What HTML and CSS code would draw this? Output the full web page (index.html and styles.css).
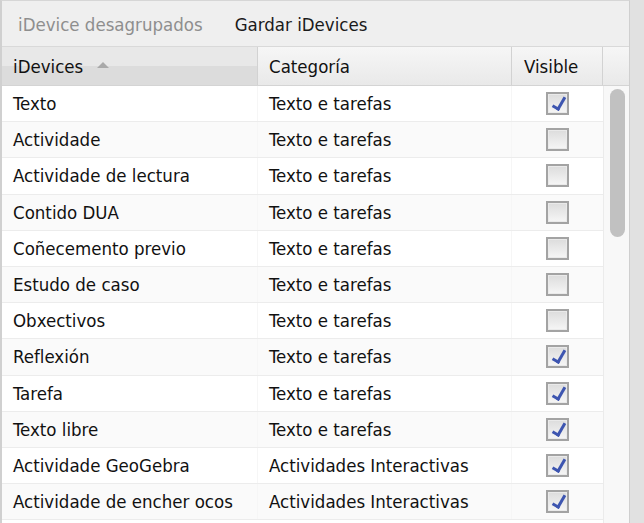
FILE: index.html
```html
<!DOCTYPE html>
<html lang="gl">
<head>
<meta charset="utf-8">
<title>iDevices</title>
<link rel="stylesheet" href="styles.css">
</head>
<body>
<div class="panel">
  <div class="toolbar">
    <span class="tab tab-muted">iDevice desagrupados</span>
    <span class="tab">Gardar iDevices</span>
  </div>
  <div class="head">
    <div class="hcell sorted">iDevices <span class="arrow"></span></div>
    <div class="hcell">Categoría</div>
    <div class="hcell vis">Visible</div>
    <div class="hcell filler"></div>
  </div>
  <div class="body">
    <div class="rows">
      <div class="row"><div class="cell">Texto</div><div class="cell">Texto e tarefas</div><div class="cell center"><span class="cb on"></span></div></div>
      <div class="row"><div class="cell">Actividade</div><div class="cell">Texto e tarefas</div><div class="cell center"><span class="cb"></span></div></div>
      <div class="row"><div class="cell">Actividade de lectura</div><div class="cell">Texto e tarefas</div><div class="cell center"><span class="cb"></span></div></div>
      <div class="row"><div class="cell">Contido DUA</div><div class="cell">Texto e tarefas</div><div class="cell center"><span class="cb"></span></div></div>
      <div class="row"><div class="cell">Coñecemento previo</div><div class="cell">Texto e tarefas</div><div class="cell center"><span class="cb"></span></div></div>
      <div class="row"><div class="cell">Estudo de caso</div><div class="cell">Texto e tarefas</div><div class="cell center"><span class="cb"></span></div></div>
      <div class="row"><div class="cell">Obxectivos</div><div class="cell">Texto e tarefas</div><div class="cell center"><span class="cb"></span></div></div>
      <div class="row"><div class="cell">Reflexión</div><div class="cell">Texto e tarefas</div><div class="cell center"><span class="cb on"></span></div></div>
      <div class="row"><div class="cell">Tarefa</div><div class="cell">Texto e tarefas</div><div class="cell center"><span class="cb on"></span></div></div>
      <div class="row"><div class="cell">Texto libre</div><div class="cell">Texto e tarefas</div><div class="cell center"><span class="cb on"></span></div></div>
      <div class="row"><div class="cell">Actividade GeoGebra</div><div class="cell">Actividades Interactivas</div><div class="cell center"><span class="cb on"></span></div></div>
      <div class="row"><div class="cell">Actividade de encher ocos</div><div class="cell">Actividades Interactivas</div><div class="cell center"><span class="cb on"></span></div></div>
    </div>
    <div class="scrollbar"><div class="thumb"></div></div>
  </div>
</div>
</body>
</html>
```

FILE: styles.css
```css
html, body {
  margin: 0;
  padding: 0;
  height: 100%;
  overflow: hidden;
}
body {
  background: #e1e1e1;
  font-family: "DejaVu Sans Condensed", "DejaVu Sans", sans-serif;
  font-stretch: condensed;
  font-size: 18.5px;
  color: #111;
}
.panel {
  width: 627px;
  height: 522px;
  border-top: 1px solid #d6d6d6;
  border-left: 2px solid #d0d0d0;
  border-right: 1px solid #cfcfcf;
  background: #fff;
  display: flex;
  flex-direction: column;
  overflow: hidden;
}
.toolbar {
  height: 46px;
  flex: none;
  box-sizing: border-box;
  background: #efefef;
  border-bottom: 1px solid #d9d9d9;
  display: flex;
  align-items: center;
  padding-left: 16px;
  padding-top: 2px;
  gap: 32px;
}
.tab { color: #1a1a1a; }
.tab-muted { color: #8e8e8e; }
.head {
  height: 39px;
  flex: none;
  box-sizing: border-box;
  display: grid;
  grid-template-columns: 256px 254px 91px 26px;
  border-bottom: 1px solid #d4d4d4;
}
.hcell {
  display: flex;
  align-items: center;
  padding-left: 11px;
  background: linear-gradient(#f6f6f6, #e9e9e9);
  border-right: 1px solid #d2d2d2;
}
.hcell.filler { border-right: none; padding: 0; }
.hcell.vis { padding-left: 12px; }
.hcell.sorted {
  background: linear-gradient(#e8e8e8 0, #e8e8e8 50%, #dcdcdc 50%, #dcdcdc 100%);
}
.arrow {
  width: 0;
  height: 0;
  border-left: 6px solid transparent;
  border-right: 6px solid transparent;
  border-bottom: 6px solid #a9a9a9;
  margin-left: 14px;
  margin-top: -2px;
}
.body {
  flex: 1;
  display: flex;
  overflow: hidden;
}
.rows {
  width: 601px;
  flex: none;
}
.row {
  height: 36.2px;
  box-sizing: border-box;
  display: grid;
  grid-template-columns: 256px 254px 91px;
  border-bottom: 1px solid #ececec;
}
.row:nth-child(even) { background: #fafafa; }
.cell {
  display: flex;
  align-items: center;
  padding-left: 11px;
  white-space: nowrap;
  overflow: hidden;
  border-right: 1px solid #f6f6f6;
}
.cell:last-child { border-right: none; }
.cell.center { justify-content: center; padding-left: 0; padding-right: 1px; }
.cb {
  width: 19px;
  height: 19px;
  border: 2px solid #a3a3a3;
  background: linear-gradient(#dcdcdc, #f6f6f6);
  box-shadow: inset 0 0 0 1px #eaeaea;
  position: relative;
}
.cb.on::after {
  content: "";
  position: absolute;
  left: 7px;
  top: 1px;
  width: 5px;
  height: 12px;
  border-right: 3px solid #3d55b0;
  border-bottom: 3px solid #3d55b0;
  transform: rotate(30deg);
}
.scrollbar {
  flex: 1;
  background: #f8f8f8;
  border-left: 1px solid #ebebeb;
  padding: 3px 0 0 6px;
}
.thumb {
  width: 15px;
  height: 148px;
  border-radius: 8px;
  background: #c1c1c1;
}
```
